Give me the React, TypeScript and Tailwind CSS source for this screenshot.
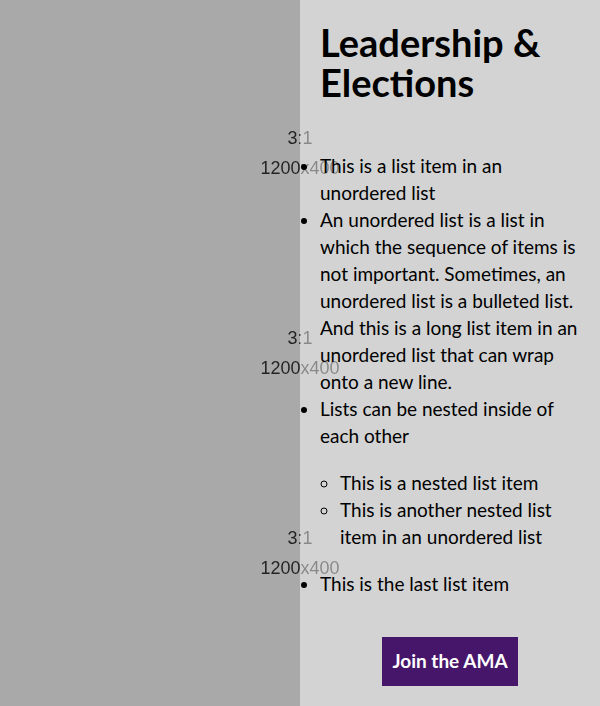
import React from 'react';

const placeholders = [0, 1, 2];

const Placeholder = () => (
  <div className="flex h-[200px] w-[600px] shrink-0 flex-col items-center justify-center text-[18px] leading-[30px] font-['Liberation_Sans',Arial,sans-serif]">
    <span className="w-[600px] bg-[linear-gradient(to_right,#222_50%,#888_50%)] bg-clip-text text-center text-transparent">
      3:1
    </span>
    <span className="w-[600px] bg-[linear-gradient(to_right,#222_50%,#888_50%)] bg-clip-text text-center text-transparent">
      1200x400
    </span>
  </div>
);

export default function App() {
  return (
    <div className="flex h-[706px] w-[600px] overflow-hidden bg-[#d3d3d3] font-['Lato','Open_Sans',sans-serif] text-black">
      <div className="relative z-10 flex w-[300px] shrink-0 flex-col justify-center bg-[#a9a9a9]">
        {placeholders.map((i) => (
          <Placeholder key={i} />
        ))}
      </div>
      <div className="flex w-[300px] flex-col px-5 pt-[22px]">
        <h1 className="relative z-20 mb-[50px] text-[38px] leading-[40px] font-bold">
          Leadership &amp; Elections
        </h1>
        <ul className="relative z-20 list-outside list-disc text-[19px] leading-[27px]">
          <li>This is a list item in an unordered list</li>
          <li>
            An unordered list is a list in which the sequence of items is not important. Sometimes, an
            unordered list is a bulleted list. And this is a long list item in an unordered list that can
            wrap onto a new line.
          </li>
          <li>
            Lists can be nested inside of each other
            <ul className="my-5 list-outside list-[circle] pl-5">
              <li>This is a nested list item</li>
              <li>This is another nested list item in an unordered list</li>
            </ul>
          </li>
          <li>This is the last list item</li>
        </ul>
        <div className="mt-[40px] flex justify-center">
          <button className="h-[49px] w-[136px] bg-[#46166b] text-[19px] font-bold text-white">
            Join the AMA
          </button>
        </div>
      </div>
    </div>
  );
}
